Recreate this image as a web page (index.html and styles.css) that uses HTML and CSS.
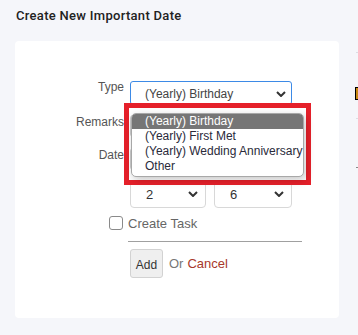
FILE: index.html
```html
<!DOCTYPE html>
<html>
<head>
<meta charset="utf-8">
<link rel="stylesheet" href="styles.css">
</head>
<body>
<div class="page">
  <div class="main">
    <div class="title">Create New Important Date</div>
    <div class="card">
      <div class="row">
        <div class="lbl lbl-type">Type</div>
        <div class="ctl">
          <div class="select select-type">
            <span>(Yearly) Birthday</span>
            <svg class="chev" width="10" height="6" viewBox="0 0 10 6"><polyline points="1,1 5,5 9,1" fill="none" stroke="#333" stroke-width="2"/></svg>
          </div>
          <div class="highlight-box"></div>
          <div class="dropdown">
            <div class="opt opt-sel">(Yearly) Birthday</div>
            <div class="opt">(Yearly) First Met</div>
            <div class="opt">(Yearly) Wedding Anniversary</div>
            <div class="opt">Other</div>
          </div>
        </div>
      </div>
      <div class="row row-remarks">
        <div class="lbl">Remarks</div>
        <div class="ctl"><div class="input"></div></div>
      </div>
      <div class="row row-date">
        <div class="lbl">Date</div>
        <div class="ctl">
          <div class="input"></div>
          <div class="date-selects">
            <div class="select select-date sd1">
              <span>2</span>
              <svg class="chev" width="10" height="6" viewBox="0 0 10 6"><polyline points="1,1 5,5 9,1" fill="none" stroke="#333" stroke-width="2"/></svg>
            </div>
            <div class="select select-date sd2">
              <span>6</span>
              <svg class="chev" width="10" height="6" viewBox="0 0 10 6"><polyline points="1,1 5,5 9,1" fill="none" stroke="#333" stroke-width="2"/></svg>
            </div>
          </div>
        </div>
      </div>
      <div class="check-row">
        <span class="checkbox"></span>
        <span class="check-label">Create Task</span>
      </div>
      <div class="divider"></div>
      <div class="actions">
        <span class="btn">Add</span>
        <span class="or">Or</span>
        <span class="cancel">Cancel</span>
      </div>
    </div>
  </div>
  <div class="side">
    <div class="side-line s1"></div>
    <div class="side-mark"></div>
    <div class="side-line s2"></div>
    <div class="side-line s3"></div>
  </div>
</div>
</body>
</html>
```

FILE: styles.css
```css
html, body {
  margin: 0;
  padding: 0;
}
body {
  background: #f5f6fa;
  font-family: "Liberation Sans", Arial, sans-serif;
  width: 358px;
  height: 335px;
  overflow: hidden;
}
.page {
  display: flex;
}
.main {
  width: 339px;
  padding-left: 15px;
  box-sizing: border-box;
}
.title {
  padding: 8px 0 0 1px;
  line-height: 16px;
  font-family: Roboto, "Liberation Sans", sans-serif;
  font-size: 13px;
  font-weight: 500;
  letter-spacing: 0.3px;
  color: #222;
}
.card {
  margin-top: 17px;
  background: #fff;
  border-radius: 4px;
  height: 277px;
  padding-top: 40px;
  box-sizing: border-box;
  position: relative;
}
.row {
  display: flex;
  gap: 6px;
}
.lbl {
  width: 109px;
  text-align: right;
  font-size: 12px;
  line-height: 14px;
  color: #555;
  flex: none;
}
.lbl-type {
  line-height: 12px;
}
.ctl {
  width: 162px;
  position: relative;
}
.select {
  display: flex;
  align-items: center;
  justify-content: space-between;
  box-sizing: border-box;
  background: #fff;
  font-size: 12px;
  color: #444;
}
.select-type {
  height: 24px;
  border: 1px solid #3d8ae6;
  border-radius: 3px;
  padding: 1px 5px 0 14px;
}
.input {
  height: 22px;
  border: 1px solid #ccc;
  border-radius: 3px;
  box-sizing: border-box;
}
.row-remarks {
  margin-top: 10px;
}
.row-date {
  margin-top: 11px;
}
.date-selects {
  display: flex;
  gap: 8px;
  margin-top: 10px;
}
.select-date {
  height: 28px;
  border: 1px solid #d8d8d8;
  border-radius: 4px;
  padding: 0 7px 0 15px;
  font-size: 13px;
  color: #333;
}
.sd1 { width: 77px; }
.sd2 { width: 79px; }
.highlight-box {
  position: absolute;
  left: -6px;
  top: 22px;
  width: 187px;
  height: 82px;
  border: 5px solid #e5202a;
  box-sizing: border-box;
  z-index: 2;
}
.dropdown {
  position: absolute;
  left: 1px;
  top: 32px;
  width: 173px;
  height: 64px;
  box-sizing: border-box;
  border: 1px solid #a8a8a8;
  border-radius: 5px;
  background: #fff;
  overflow: hidden;
  box-shadow: 2px 3px 8px rgba(0, 0, 0, 0.22);
  z-index: 3;
}
.opt {
  height: 15px;
  line-height: 15px;
  padding-left: 13px;
  font-size: 12px;
  color: #2a2a3a;
  white-space: nowrap;
}
.opt-sel {
  background: #767676;
  color: #fff;
}
.check-row {
  display: flex;
  align-items: center;
  gap: 5px;
  margin-top: 8px;
  padding-left: 94px;
  height: 14px;
}
.checkbox {
  width: 14px;
  height: 14px;
  box-sizing: border-box;
  border: 1px solid #8a8a8a;
  border-radius: 3px;
  background: #fff;
}
.check-label {
  font-size: 13px;
  color: #666;
}
.divider {
  margin: 11px 0 0 113px;
  width: 174px;
  border-top: 1px solid #a0a0a0;
}
.actions {
  display: flex;
  align-items: center;
  margin: 7px 0 0 115px;
  font-size: 13px;
}
.btn {
  width: 33px;
  height: 29px;
  box-sizing: border-box;
  background: #efefef;
  border: 1px solid #d2d2d2;
  border-radius: 3px;
  font-size: 12px;
  color: #333;
  display: flex;
  align-items: center;
  justify-content: center;
  padding-top: 2px;
}
.or {
  margin-left: 6px;
  color: #777;
}
.cancel {
  margin-left: 4px;
  color: #a8392b;
}
.side {
  width: 19px;
  display: flex;
  flex-direction: column;
  padding-left: 17px;
  box-sizing: border-box;
}
.side-line {
  width: 2px;
  height: 1px;
  background: #dcdde3;
}
.s1 { margin-top: 52px; }
.side-mark {
  margin-top: 34px;
  width: 3px;
  height: 13px;
  box-sizing: border-box;
  border: 1px solid #000;
  border-right: none;
  background: #c98a14;
  margin-left: -1px;
}
.s2 { margin-top: 18px; }
.s3 { margin-top: 48px; background: #888; }
```
